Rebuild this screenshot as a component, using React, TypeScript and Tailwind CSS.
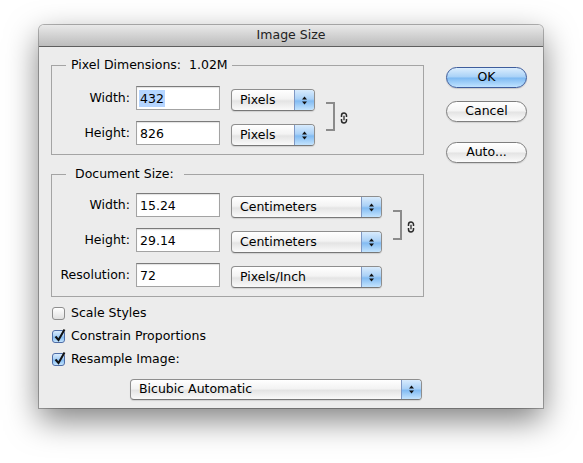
import React from "react";

function Arrows() {
  return (
    <svg width="7" height="11" viewBox="0 0 7 11">
      <path d="M3.5 1.5 L6 4.5 H1 Z" fill="#111" />
      <path d="M1 6.5 H6 L3.5 9.5 Z" fill="#111" />
    </svg>
  );
}

function Select({ label, cls }: { label: string; cls: string }) {
  return (
    <div
      className={`flex ${cls} rounded-[4px] border border-[#8e8e8e] border-b-[#777] bg-[linear-gradient(to_bottom,#ffffff,#f3f3f3_45%,#e4e4e4_55%,#fafafa)] shadow-[0_1px_1px_rgba(0,0,0,0.12)] overflow-hidden`}
    >
      <span className="flex-1 pl-[8px] flex items-center text-black">{label}</span>
      <span className="w-[20px] flex items-center justify-center border-l border-[#7f98c4] bg-[linear-gradient(to_bottom,#d8ebfd,#aad1f7_45%,#82bbf2_55%,#c4e4fe)]">
        <Arrows />
      </span>
    </div>
  );
}

function Field({ value, selected }: { value: string; selected?: boolean }) {
  return (
    <div className="w-[84px] h-[24px] border border-[#a3a3a3] border-t-[#7b7b7b] bg-white shadow-[inset_0_1px_1px_rgba(0,0,0,0.12)] pl-[2px] flex items-center">
      <span className={selected ? "bg-[#b5d5ff] px-[1px] leading-[17px]" : "px-[1px] leading-[17px]"}>{value}</span>
    </div>
  );
}

function Row({
  label,
  value,
  unit,
  selCls,
  selected,
}: {
  label: string;
  value: string;
  unit: string;
  selCls: string;
  selected?: boolean;
}) {
  return (
    <div className="flex items-start">
      <span className="w-[78px] text-right leading-[24px]">{label}</span>
      <div className="ml-[6px]">
        <Field value={value} selected={selected} />
      </div>
      <div className="ml-[11px] mt-[3px]">
        <Select label={unit} cls={selCls} />
      </div>
    </div>
  );
}

function Link() {
  return (
    <svg width="8" height="12" viewBox="0 0 8 12">
      <path d="M1.5 5 V3.5 a2.5 2.5 0 0 1 5 0 V5" fill="none" stroke="#2a2a2a" strokeWidth="1.5" />
      <path d="M1.5 7 V8.5 a2.5 2.5 0 0 0 5 0 V7" fill="none" stroke="#2a2a2a" strokeWidth="1.5" />
      <path d="M4 3.8 V8.2" fill="none" stroke="#2a2a2a" strokeWidth="1.3" />
    </svg>
  );
}

function Bracket({ cls }: { cls: string }) {
  return (
    <div className="flex items-center">
      <div className={`w-[9px] ${cls} border-2 border-l-0 border-[#8b8b8b]`} />
      <div className="ml-[5px] mt-[4px]">
        <Link />
      </div>
    </div>
  );
}

function Check({ checked }: { checked?: boolean }) {
  if (checked) {
    return (
      <span className="relative block w-[13px] h-[13px] rounded-[3px] border border-[#4f6da6] bg-[linear-gradient(to_bottom,#d8ebfd,#a9d0f6_45%,#82bbf2_55%,#c4e4fe)]">
        <svg className="absolute left-[0px] top-[-3px]" width="14" height="15" viewBox="0 0 14 15">
          <path d="M2.5 8.5 L5.5 12 L11.5 1.5" fill="none" stroke="#111" strokeWidth="2" />
        </svg>
      </span>
    );
  }
  return (
    <span className="block w-[13px] h-[13px] rounded-[3px] border border-[#8e8e8e] bg-[linear-gradient(to_bottom,#ffffff,#f0f0f0_50%,#e0e0e0)]" />
  );
}

function CheckRow({ label, checked }: { label: string; checked?: boolean }) {
  return (
    <div className="flex items-center h-[23px]">
      <span className="ml-[1px]">
        <Check checked={checked} />
      </span>
      <span className="ml-[6px]">{label}</span>
    </div>
  );
}

function Button({ label, primary }: { label: string; primary?: boolean }) {
  return (
    <div
      className={
        primary
          ? "w-[81px] h-[21px] rounded-full border border-[#3e5d9c] bg-[linear-gradient(to_bottom,#dbedfd,#a8d1f7_48%,#7db9f2_52%,#c0e3ff)] flex items-center justify-center shadow-[0_1px_1px_rgba(0,0,0,0.15)]"
          : "w-[81px] h-[21px] rounded-full border border-[#7e7e7e] bg-[linear-gradient(to_bottom,#ffffff,#f4f4f4_48%,#e3e3e3_52%,#fbfbfb)] flex items-center justify-center shadow-[0_1px_1px_rgba(0,0,0,0.12)]"
      }
    >
      {label}
    </div>
  );
}

export default function App() {
  return (
    <div className="w-[583px] h-[463px] bg-white pt-[25px] pl-[39px] overflow-hidden font-['DejaVu_Sans','Liberation_Sans',sans-serif] text-[12.5px] text-black">
      <div className="w-[504px] h-[383px] flex flex-col bg-[#ececec] rounded-t-[5px] shadow-[0_0_0_1px_rgba(0,0,0,0.28),0_12px_32px_rgba(0,0,0,0.5)]">
        <div className="h-[22px] rounded-t-[5px] border-b border-[#5e5e5e] bg-[linear-gradient(to_bottom,#e9e9e9,#d2d2d2_50%,#bcbcbc)] flex items-center justify-center text-[#222]">
          Image Size
        </div>
        <div className="flex">
          <div className="ml-[12px] w-[373px] flex flex-col">
            <fieldset className="mt-[10px] border border-[#a4a4a4]">
              <legend className="ml-[14px] pl-[5px] pr-[4px] leading-[16px] whitespace-pre">Pixel Dimensions:  1.02M</legend>
              <div className="flex items-center pt-[13px] pb-[8px]">
                <div className="flex flex-col gap-[10px]">
                  <Row label="Width:" value="432" unit="Pixels" selCls="w-[84px] h-[22px]" selected />
                  <Row label="Height:" value="826" unit="Pixels" selCls="w-[84px] h-[22px]" />
                </div>
                <div className="ml-[11px]">
                  <Bracket cls="h-[29px]" />
                </div>
              </div>
            </fieldset>
            <fieldset className="mt-[11px] border border-[#a4a4a4]">
              <legend className="ml-[14px] pl-[9px] pr-[10px] leading-[16px]">Document Size:</legend>
              <div className="flex flex-col pt-[11px] pb-[8px] gap-[10px]">
                <div className="flex items-center">
                  <div className="flex flex-col gap-[10px]">
                    <Row label="Width:" value="15.24" unit="Centimeters" selCls="w-[151px] h-[22px]" />
                    <Row label="Height:" value="29.14" unit="Centimeters" selCls="w-[151px] h-[22px]" />
                  </div>
                  <div className="ml-[11px] mt-[4px]">
                    <Bracket cls="h-[30px]" />
                  </div>
                </div>
                <Row label="Resolution:" value="72" unit="Pixels/Inch" selCls="w-[151px] h-[22px]" />
              </div>
            </fieldset>
            <div className="mt-[5px] flex flex-col">
              <CheckRow label="Scale Styles" />
              <CheckRow label="Constrain Proportions" checked />
              <CheckRow label="Resample Image:" checked />
            </div>
            <div className="mt-[8px] ml-[79px]">
              <Select label="Bicubic Automatic" cls="w-[292px] h-[21px]" />
            </div>
          </div>
          <div className="ml-[22px] pt-[20px] flex flex-col">
            <Button label="OK" primary />
            <div className="mt-[13px]">
              <Button label="Cancel" />
            </div>
            <div className="mt-[20px]">
              <Button label="Auto..." />
            </div>
          </div>
        </div>
      </div>
    </div>
  );
}
